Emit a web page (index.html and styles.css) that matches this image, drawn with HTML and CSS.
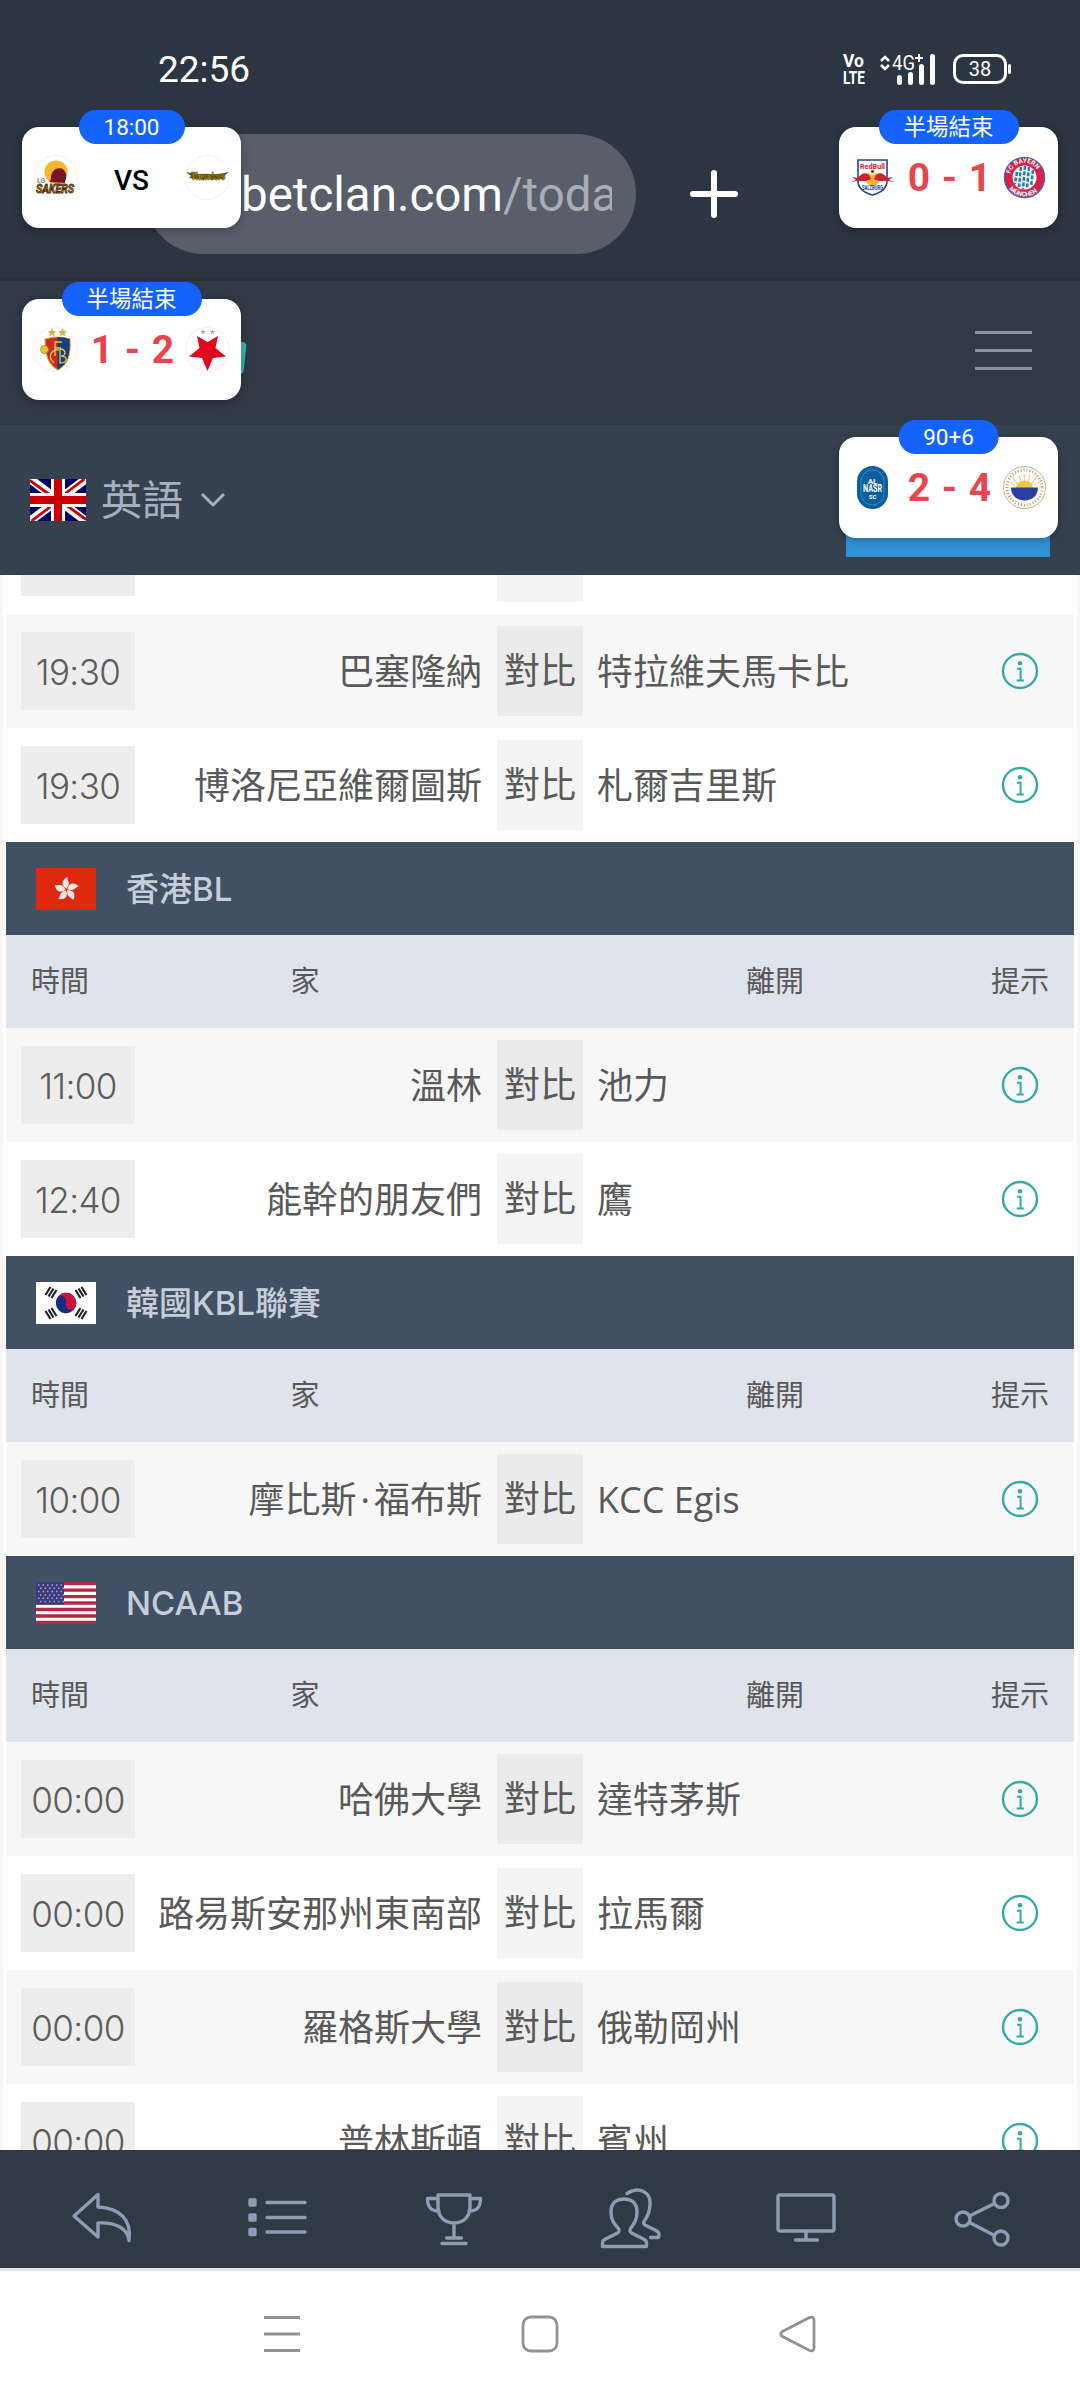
FILE: index.html
```html
<!DOCTYPE html>
<html lang="zh-Hant">
<head>
    <meta charset="UTF-8">
    <meta name="viewport" content="width=device-width, initial-scale=1.0">
    <title>betclan.com</title>
    <link rel="stylesheet" href="styles.css">
</head>
<body>
    <!-- shared symbols -->
    <svg class="defs" width="0" height="0">
        <symbol id="info" viewBox="0 0 40 40">
            <circle cx="20" cy="20" r="17" fill="none" stroke="currentColor" stroke-width="2.4"/>
            <circle cx="20" cy="12.3" r="2.3" fill="currentColor"/>
            <path d="M17 17.700h3.600v11.800M16.600 29.500h7.200" fill="none" stroke="currentColor" stroke-width="2"/>
        </symbol>
    </svg>

    <div class="phone">
        <div class="status">
            <span class="clock">22:56</span>
            <div class="status-icons">
                <svg class="volte" width="24" height="32" viewBox="0 0 24 32">
                    <text x="1" y="14" font-size="18" textLength="21" lengthAdjust="spacingAndGlyphs">Vo</text>
                    <text x="1" y="31" font-size="19" textLength="22" lengthAdjust="spacingAndGlyphs">LTE</text>
                </svg>
                <svg class="signal" width="58" height="32" viewBox="0 0 58 32">
                    <path d="M2 8l4-4 4 4M2 12l4 4 4-4" fill="none" stroke="#fff" stroke-width="2.600"/>
                    <text x="13" y="17" font-size="21" textLength="23" lengthAdjust="spacingAndGlyphs" fill="#fff">4G</text>
                    <path d="M36 5h8M40 1v8" stroke="#fff" stroke-width="2"/>
                    <path d="M20.500 24.500v5M31.500 21.500v8M42.500 13.500v16M53.500 3.500v26" stroke="#fff" stroke-width="5" stroke-linecap="round"/>
                </svg>
                <div class="battery">38</div>
            </div>
        </div>

        <div class="browser-bar">
            <div class="url"><span class="url-text">betclan.com<i>/today</i></span></div>
            <svg width="54" height="54" viewBox="0 0 54 54">
                <path d="M27 6v42M6 27h42" stroke="#fff" stroke-width="6" stroke-linecap="round"/>
            </svg>
        </div>

        <header class="site-top">
            <div class="site-logo"></div>
            <div class="burger"><span></span><span></span><span></span></div>
        </header>

        <div class="site-lang">
            <svg width="56" height="42" viewBox="0 0 56 42">
                <rect width="56" height="42" fill="#006"/>
                <path d="M0 0l56 42M56 0L0 42" stroke="#fff" stroke-width="8.500"/>
                <path d="M0 1.500l22 16M56 40.500l-22-16M54.500 0L32 17M1.500 42L24 25" stroke="#c00" stroke-width="2.800"/>
                <path d="M28 0v42M0 21h56" stroke="#fff" stroke-width="14"/>
                <path d="M28 0v42M0 21h56" stroke="#c00" stroke-width="8"/>
            </svg>
            <span class="lang-name">英語</span>
            <svg width="26" height="18" viewBox="0 0 26 18">
                <path d="M2 3l11 11L24 3" fill="none" stroke="#a5b0c0" stroke-width="3"/>
            </svg>
            <div class="login"></div>
        </div>

        <main class="games">
            <div class="row">
                <div class="time"><b></b></div><div class="home"></div>
                <div class="vs"></div><div class="away"></div><div class="tip"></div>
            </div>
            <div class="row odd">
                <div class="time"><b>19:30</b></div><div class="home">巴塞隆納</div>
                <div class="vs">對比</div><div class="away">特拉維夫馬卡比</div>
                <div class="tip"><svg><use href="#info"/></svg></div>
            </div>
            <div class="row">
                <div class="time"><b>19:30</b></div><div class="home">博洛尼亞維爾圖斯</div>
                <div class="vs">對比</div><div class="away">札爾吉里斯</div>
                <div class="tip"><svg><use href="#info"/></svg></div>
            </div>

            <div class="league">
                <svg width="60" height="42" viewBox="0 0 60 42">
                    <rect width="60" height="42" fill="#de2910"/>
                    <g fill="#fbe9e4" transform="translate(30.500 21.500)">
                        <path id="petal" d="M0 -1C-6 -4 -5 -10 1 -12.500C0 -10 5 -7 0 -1z"/>
                        <use href="#petal" transform="rotate(72)"/>
                        <use href="#petal" transform="rotate(144)"/>
                        <use href="#petal" transform="rotate(216)"/>
                        <use href="#petal" transform="rotate(288)"/>
                    </g>
                </svg>
                <span>香港BL</span>
            </div>
            <div class="cols"><span>時間</span><span>家</span><span></span><span>離開</span><span>提示</span></div>
            <div class="row odd">
                <div class="time"><b>11:00</b></div><div class="home">溫林</div>
                <div class="vs">對比</div><div class="away">池力</div>
                <div class="tip"><svg><use href="#info"/></svg></div>
            </div>
            <div class="row">
                <div class="time"><b>12:40</b></div><div class="home">能幹的朋友們</div>
                <div class="vs">對比</div><div class="away">鷹</div>
                <div class="tip"><svg><use href="#info"/></svg></div>
            </div>

            <div class="league">
                <svg width="60" height="42" viewBox="0 0 60 42">
                    <rect width="60" height="42" fill="#fff"/>
                    <g transform="rotate(20 30 21)">
                        <circle cx="30" cy="21" r="10.300" fill="#0f2f80"/>
                        <path d="M19.700 21a10.300 10.300 0 0 1 20.600 0a5.150 5.150 0 0 1-10.300 0a5.150 5.150 0 0 0-10.300 0z" fill="#d0103a"/>
                    </g>
                    <g stroke="#222" stroke-width="2.200">
                        <path id="bars" d="M10 13l5-8M13 14.500l5-8M16 16l5-8" transform="translate(-.500 0)"/>
                        <use href="#bars" transform="matrix(-1 0 0 1 60 0)"/>
                        <use href="#bars" transform="matrix(1 0 0 -1 0 42)"/>
                        <use href="#bars" transform="matrix(-1 0 0 -1 60 42)"/>
                    </g>
                </svg>
                <span>韓國KBL聯賽</span>
            </div>
            <div class="cols"><span>時間</span><span>家</span><span></span><span>離開</span><span>提示</span></div>
            <div class="row odd">
                <div class="time"><b>10:00</b></div><div class="home">摩比斯<span class="dot">·</span>福布斯</div>
                <div class="vs">對比</div><div class="away">KCC Egis</div>
                <div class="tip"><svg><use href="#info"/></svg></div>
            </div>

            <div class="league">
                <svg width="60" height="42" viewBox="0 0 60 42">
                    <rect width="60" height="42" fill="#fff"/>
                    <path d="M0 1.600h60M0 8.100h60M0 14.600h60M0 21h60M0 27.500h60M0 34h60M0 40.400h60" stroke="#b02a40" stroke-width="3.300"/>
                    <rect width="28" height="22.600" fill="#3c3b7e"/>
                    <path d="M2 3h26M4 6.300h24M2 9.600h26M4 12.900h24M2 16.200h26M4 19.500h24" stroke="#a9a9cc" stroke-width="1.500" stroke-dasharray="1.500 3"/>
                </svg>
                <span>NCAAB</span>
            </div>
            <div class="cols"><span>時間</span><span>家</span><span></span><span>離開</span><span>提示</span></div>
            <div class="row odd">
                <div class="time"><b>00:00</b></div><div class="home">哈佛大學</div>
                <div class="vs">對比</div><div class="away">達特茅斯</div>
                <div class="tip"><svg><use href="#info"/></svg></div>
            </div>
            <div class="row">
                <div class="time"><b>00:00</b></div><div class="home">路易斯安那州東南部</div>
                <div class="vs">對比</div><div class="away">拉馬爾</div>
                <div class="tip"><svg><use href="#info"/></svg></div>
            </div>
            <div class="row odd">
                <div class="time"><b>00:00</b></div><div class="home">羅格斯大學</div>
                <div class="vs">對比</div><div class="away">俄勒岡州</div>
                <div class="tip"><svg><use href="#info"/></svg></div>
            </div>
            <div class="row">
                <div class="time"><b>00:00</b></div><div class="home">普林斯頓</div>
                <div class="vs">對比</div><div class="away">賓州</div>
                <div class="tip"><svg><use href="#info"/></svg></div>
            </div>
        </main>

        <nav class="tabs">
            <a><svg viewBox="0 0 64 64">
                <path d="M28 8.500L4 30l24 21V37c18-1 30 6 31 17.500C62 34 50 22 28 21z"/>
            </svg></a>
            <a><svg viewBox="0 0 64 64">
                <path d="M21 16.500h38M21 31.500h38M21 46h38"/>
                <path class="solid" d="M4 14h5v5H4zM4 29h5v5H4zM4 43.500h5v5H4z"/>
            </svg></a>
            <a><svg viewBox="0 0 64 64">
                <path d="M16 9h32v12c0 9-6 16-16 16s-16-7-16-16zM16 12.500H5.500c0 8 3 12.500 11.500 12.500M48 12.500h10.500c0 8-3 12.500-11.500 12.500M32 37v15M24.500 52h15M20 57.500h24"/>
            </svg></a>
            <a><svg viewBox="0 0 64 64">
                <path d="M26 13c8 0 13 4.500 13 13c0 8-3 12-6.500 16.500c-1.500 3 0 4 2 5l11 5.500c3.500 2 3 3 3 7.500h-44c0-5-.500-5.500 3-7.500l11-5.500c2-1 3.500-2 2-5C16 38 13 34 13 26c0-8.500 5-13 13-13z"/>
                <path d="M29 7.500C41 0 53 6 52 18c0 8-2 12-6 17.500c-1 2-.500 2.500 1 3.500l10 5c4 2 4.500 3 3.500 7.500h-8"/>
            </svg></a>
            <a><svg viewBox="0 0 64 64">
                <rect x="4" y="9" width="56" height="36" rx="2"/>
                <path d="M32 45v9M21.500 54h22"/>
            </svg></a>
            <a><svg viewBox="0 0 64 64">
                <circle cx="13" cy="33" r="7"/><circle cx="51" cy="14.500" r="7"/><circle cx="51" cy="52" r="7"/>
                <path d="M19.500 30l25-12.500M19.500 36.500l25 13"/>
            </svg></a>
        </nav>

        <nav class="system">
            <svg viewBox="0 0 44 44"><path d="M4 5.500h36M4 22h36M4 38.500h36"/></svg>
            <svg viewBox="0 0 44 44"><rect x="5" y="5" width="34" height="34" rx="8"/></svg>
            <svg viewBox="0 0 44 44"><path d="M33.500 5.500L6.500 19.500q-3.500 2.500 0 5L33.500 38.500q4.500 1.500 4.500-3V8.500q0-4.500-4.500-3z"/></svg>
        </nav>

        <!-- floating live scores -->
        <div class="score score-a">
            <em>18:00</em>
            <svg class="crest" viewBox="0 0 45 45">
                <circle cx="22.500" cy="22.500" r="22" fill="none" stroke="#f2f2f2"/>
                <circle cx="23" cy="17" r="11.500" fill="#f9b52c"/>
                <path d="M16 27c3-2 1-5 3-9c3-6 12-7 14 1c1 4-1 7-1 9z" fill="#7b1526"/>
                <text x="4" y="28" font-size="7" font-weight="bold" fill="#888">LG</text>
                <text x="3" y="38" font-size="12" font-weight="bold" font-style="italic" textLength="38" lengthAdjust="spacingAndGlyphs" fill="#b07a18" stroke="#4d2a10" stroke-width=".800">SAKERS</text>
            </svg>
            <strong class="pending">VS</strong>
            <svg class="crest" viewBox="0 0 45 45">
                <circle cx="22.500" cy="22.500" r="22" fill="none" stroke="#f2f2f2"/>
                <path d="M1 17l10 2h23l10-2-5 4 2 2-6 1H10l-6-1 2-2z" fill="#5c5220"/>
                <text x="6" y="25" font-size="11" font-weight="bold" textLength="34" lengthAdjust="spacingAndGlyphs" fill="#d9b520" stroke="#4a4010" stroke-width=".600">Thunders</text>
            </svg>
        </div>

        <div class="score score-b">
            <em>半場結束</em>
            <svg class="crest" viewBox="0 0 45 45">
                <path d="M8 5h29v21c0 8-7 12-14.500 14C15 38 8 34 8 26z" fill="#fff" stroke="#24468c" stroke-width="1.600"/>
                <text x="10" y="14" font-size="8" font-weight="bold" textLength="25" lengthAdjust="spacingAndGlyphs" fill="#d8203a">RedBull</text>
                <circle cx="22.500" cy="24" r="7" fill="#f8b03c"/>
                <path d="M1 27l5-2-4-3 6 1c3-5 8-6 11-3l2 4-5 2-9 0zM44 27l-5-2 4-3-6 1c-3-5-8-6-11-3l-2 4 5 2 9 0z" fill="#d3202f"/>
                <circle cx="22.500" cy="17" r="3.200" fill="#f5e6b8"/><circle cx="22.500" cy="16.500" r="1.200"/>
                <text x="12" y="35" font-size="7" font-weight="bold" textLength="21" lengthAdjust="spacingAndGlyphs" fill="#24468c">SALZBURG</text>
            </svg>
            <strong>0 - 1</strong>
            <svg class="crest" viewBox="0 0 45 45">
                <circle cx="22.500" cy="22.500" r="20" fill="#de1f45" stroke="#4a5fa8" stroke-width="1.500"/>
                <circle cx="22.500" cy="22.500" r="12" fill="#fff"/>
                <g stroke="#2a7ab8" stroke-width="2.600" stroke-dasharray="4 1.500"><path d="M15 17l-2 12M19 12l-2 20M23 11l-2 23M27 12l-2 21M31 15l-2 16"/></g>
                <path id="ring-top" d="M8.500 26a14.500 14.500 0 1 1 28 0" fill="none"/>
                <path id="ring-bottom" d="M3.500 22.500a19 19 0 0 0 38 0" fill="none"/>
                <text font-size="6.500" font-weight="bold" fill="#fff"><textPath href="#ring-top" startOffset="7">FC BAYERN</textPath></text>
                <text font-size="6.500" font-weight="bold" fill="#fff"><textPath href="#ring-bottom" startOffset="12">MÜNCHEN</textPath></text>
            </svg>
        </div>

        <div class="score score-c">
            <em>半場結束</em>
            <svg class="crest" viewBox="0 0 45 45">
                <circle cx="22.500" cy="22.500" r="22" fill="none" stroke="#f6f1f1"/>
                <path d="M19 1l1.300 3 3.200.300-2.400 2.100.700 3.100-2.800-1.700-2.800 1.700.700-3.100-2.400-2.100 3.200-.300zM29.500 1l1.300 3 3.200.300-2.400 2.100.700 3.100-2.800-1.700-2.800 1.700.700-3.100-2.400-2.100 3.200-.300z" fill="#d5b548"/>
                <path d="M12 12q12-4 25 0c1 16-2 25-12 31C15 38 12 28 12 12z" fill="#cf2a1e" stroke="#d9b53a" stroke-width="1.200"/>
                <path d="M24.500 10q7 0 12 2c1 16-2 25-12 31z" fill="#16407c"/>
                <path d="M22 29V15h7M22 21h6M21 36c-7-6-3-14 5-13M27 22v14c8 0 8-7 1-7c6 0 5-7-1-7" fill="none" stroke="#e6c84a" stroke-width="1.300"/>
                <circle cx="11.500" cy="22.500" r="4" fill="#e3c62d" stroke="#7c6a1c" stroke-width=".600"/>
            </svg>
            <strong>1 - 2</strong>
            <svg class="crest" viewBox="0 0 45 45">
                <circle cx="22.500" cy="22.500" r="22" fill="none" stroke="#f6eeee"/>
                <path d="M18 2l.800 1.900 2 .100-1.600 1.300.500 2-1.700-1.100-1.700 1.100.500-2L15.200 4l2-.100zM27.500 2l.800 1.900 2 .100-1.600 1.300.500 2-1.700-1.100-1.700 1.100.500-2L24.700 4l2-.100z" fill="#b9ab86"/>
                <path d="M12 9l10.500 6L33 9l-2.500 12 10.500 8.500-13 1.500-5.500 13-5.500-13-13-1.500L14.500 21z" fill="#e4061c"/>
            </svg>
        </div>

        <div class="score score-d">
            <em>90+6</em>
            <svg class="crest" viewBox="0 0 45 45">
                <rect x="7" y="1" width="31" height="43" rx="15.500" fill="#0d5e9c"/>
                <rect x="11" y="5" width="23" height="35" rx="11.500" fill="none" stroke="#2d8ac8"/>
                <g fill="#fff" font-weight="bold" text-anchor="middle">
                    <text x="22.500" y="18.500" font-size="8">AL</text>
                    <text x="22.500" y="27" font-size="10" textLength="19" lengthAdjust="spacingAndGlyphs">NASR</text>
                    <text x="22.500" y="33.500" font-size="6">SC</text>
                </g>
            </svg>
            <strong>2 - 4</strong>
            <svg class="crest" viewBox="0 0 45 45">
                <circle cx="22.500" cy="22.500" r="21" fill="#fff" stroke="#c3b180"/>
                <circle cx="22.500" cy="22.500" r="17.500" fill="none" stroke="#b7a276" stroke-width="3" stroke-dasharray="1 2"/>
                <path d="M22.500 22V9M16 20l-5-8M29 20l5-8M13 21l-5-4M32 21l5-4M19 17l-2-7M26 17l2-7" stroke="#ead9a0" stroke-width="1.500"/>
                <path d="M14 23a8.500 7.500 0 0 1 17 0z" fill="#f0c445"/>
                <path d="M9 22.500h27c0 8-6 13-13.500 13S9 30.500 9 22.500z" fill="#2b3f9c"/>
            </svg>
        </div>
    </div>
</body>
</html>
```

FILE: styles.css
```css
* {
    box-sizing: border-box;
}
body {
    margin: 0;
    background: #fff;
    font-family: "Open Sans", "Noto Sans CJK TC", sans-serif;
}
.defs {
    position: absolute;
}
.phone {
    position: relative;
    display: flex;
    flex-direction: column;
    width: 1080px;
    height: 2400px;
    overflow: hidden;
}

/* status bar */
.status {
    display: flex;
    justify-content: space-between;
    align-items: center;
    height: 126px;
    padding: 12px 73px 0 158px;
    background: #2b3642;
    color: #fff;
    font-family: Roboto, sans-serif;
}
.clock {
    font-size: 37px;
}
.status-icons {
    display: flex;
    align-items: center;
}
.volte {
    margin-right: 13px;
    fill: #fff;
    font-weight: bold;
}
.signal {
    margin-right: 16px;
}
.battery {
    position: relative;
    width: 54px;
    height: 30px;
    border: 3px solid #fff;
    border-radius: 10px;
    font-size: 20px;
    line-height: 25px;
    text-align: center;
}
.battery::after {
    content: "";
    position: absolute;
    top: 7px;
    right: -7px;
    width: 3px;
    height: 10px;
    border-radius: 2px;
    background: #fff;
}

/* browser address bar */
.browser-bar {
    display: flex;
    gap: 51px;
    align-items: center;
    height: 155px;
    padding: 0 0 17px 144px;
    border-bottom: 3px solid #27313c;
    background: #2b3642;
}
.url {
    width: 492px;
    height: 120px;
    padding: 33px 24px 0 97px;
    border-radius: 60px;
    background: #585f6b;
    color: #fff;
    font: 47.5px/56px Roboto, sans-serif;
}
.url-text {
    display: block;
    overflow: hidden;
    white-space: nowrap;
}
.url i {
    color: #a9adb4;
    font-style: normal;
}

/* site header */
.site-top {
    display: flex;
    justify-content: space-between;
    align-items: center;
    height: 144px;
    padding: 0 48px 0 200px;
    background: #303a47;
}
.site-logo {
    width: 45px;
    height: 32px;
    margin-top: 10px;
    border-radius: 4px;
    background: #3cb4bb;
    transform: skewX(-6deg);
}
.burger {
    display: grid;
    gap: 15px;
    width: 57px;
    margin-bottom: 6px;
}
.burger span {
    height: 3px;
    background: #8892a2;
}
.site-lang {
    display: flex;
    align-items: center;
    height: 150px;
    padding: 0 30px;
    background: #364150;
}
.lang-name {
    margin: 0 17px 2px 15px;
    color: #a5b0c0;
    font-size: 41px;
    line-height: 50px;
}
.login {
    width: 204px;
    height: 114px;
    margin-left: auto;
    background: #3192d6;
}

/* fixtures, the first row is scrolled under the header */
.games {
    flex: none;
    display: flex;
    flex-direction: column;
    justify-content: flex-end;
    height: 1623px;
    margin-bottom: -48px;
    padding: 0 3px;
    border: solid #f6f6f6;
    border-width: 0 3px;
    overflow: hidden;
    color: #595959;
}
.row {
    flex: none;
    display: grid;
    grid-template-columns: 129px 362px 86px 383px 108px;
    align-items: center;
    height: 114px;
    background: #fff;
    font-size: 36px;
    line-height: 50px;
}
.odd {
    background: #f7f7f7;
}
.time b {
    display: block;
    width: 114px;
    height: 78px;
    margin-left: 15px;
    background: #ededed;
    color: #5c5c5c;
    font: 300 35px/80px Inter, sans-serif;
    letter-spacing: -0.6px;
    text-align: center;
}
.home {
    padding: 2px 15px 0 0;
    text-align: right;
    white-space: nowrap;
}
.dot {
    margin: 0 4px;
}
.vs {
    height: 90px;
    background: #f4f4f4;
    line-height: 90px;
    text-align: center;
}
.odd .vs {
    background: #ebebeb;
}
.away {
    padding: 2px 0 0 14px;
}
.tip {
    text-align: center;
    color: #35a9a6;
}
.tip svg {
    display: block;
    width: 40px;
    height: 40px;
    margin: 0 auto;
}
.league {
    flex: none;
    display: flex;
    gap: 30px;
    align-items: center;
    height: 93px;
    padding: 0 30px;
    background: #425066;
    color: #c6cfd9;
    font-family: Inter, "Noto Sans CJK TC", sans-serif;
    font-size: 33px;
    font-weight: 500;
    line-height: 48px;
}
.cols {
    flex: none;
    display: grid;
    grid-template-columns: 108px 382px 88px 382px 108px;
    height: 93px;
    background: #dfe3eb;
    font-size: 29px;
    line-height: 92px;
    text-align: center;
}

/* site tab bar */
.tabs {
    position: relative;
    flex: none;
    display: flex;
    height: 118px;
    padding: 2px 10px 0 14px;
    background: #303a47;
}
.tabs a {
    flex: 1;
    display: flex;
    justify-content: center;
    padding-top: 34px;
}
.tabs svg {
    width: 64px;
    height: 64px;
    fill: none;
    stroke: #8e9db3;
    stroke-width: 3.4;
    stroke-linecap: round;
    stroke-linejoin: round;
}
.tabs .solid {
    fill: #8e9db3;
}

/* phone navigation */
.system {
    flex: none;
    display: flex;
    gap: 214px;
    justify-content: center;
    height: 132px;
    padding-top: 41px;
    border-top: 3px solid #e1e1e9;
    background: #fff;
}
.system svg {
    width: 44px;
    height: 44px;
    fill: none;
    stroke: #929292;
    stroke-width: 2.8;
}

/* floating score cards */
.score {
    position: absolute;
    display: flex;
    justify-content: space-between;
    align-items: flex-start;
    width: 219px;
    height: 101px;
    padding: 28px 11px 0;
    border-radius: 17px;
    background: #fff;
    box-shadow: 0 2px 10px rgba(0, 0, 0, 0.3);
    font-family: Roboto, "Noto Sans CJK TC", sans-serif;
}
.score-a {
    left: 22px;
    top: 127px;
}
.score-b {
    left: 839px;
    top: 127px;
}
.score-c {
    left: 22px;
    top: 299px;
}
.score-d {
    left: 839px;
    top: 437px;
}
.score em {
    position: absolute;
    top: -17px;
    left: 50%;
    height: 34px;
    padding: 0 25px;
    border-radius: 17px;
    background: #1463ff;
    color: #fff;
    font-size: 22.5px;
    font-style: normal;
    line-height: 34px;
    white-space: nowrap;
    transform: translateX(-50%);
}
.crest {
    width: 45px;
    height: 45px;
}
.score strong {
    margin-left: 2px;
    color: #e8454e;
    font-size: 39px;
    line-height: 46px;
    word-spacing: 2px;
}
.score .pending {
    margin-left: 0;
    color: #000;
    font-size: 28px;
    font-weight: 500;
    line-height: 52px;
}
```
